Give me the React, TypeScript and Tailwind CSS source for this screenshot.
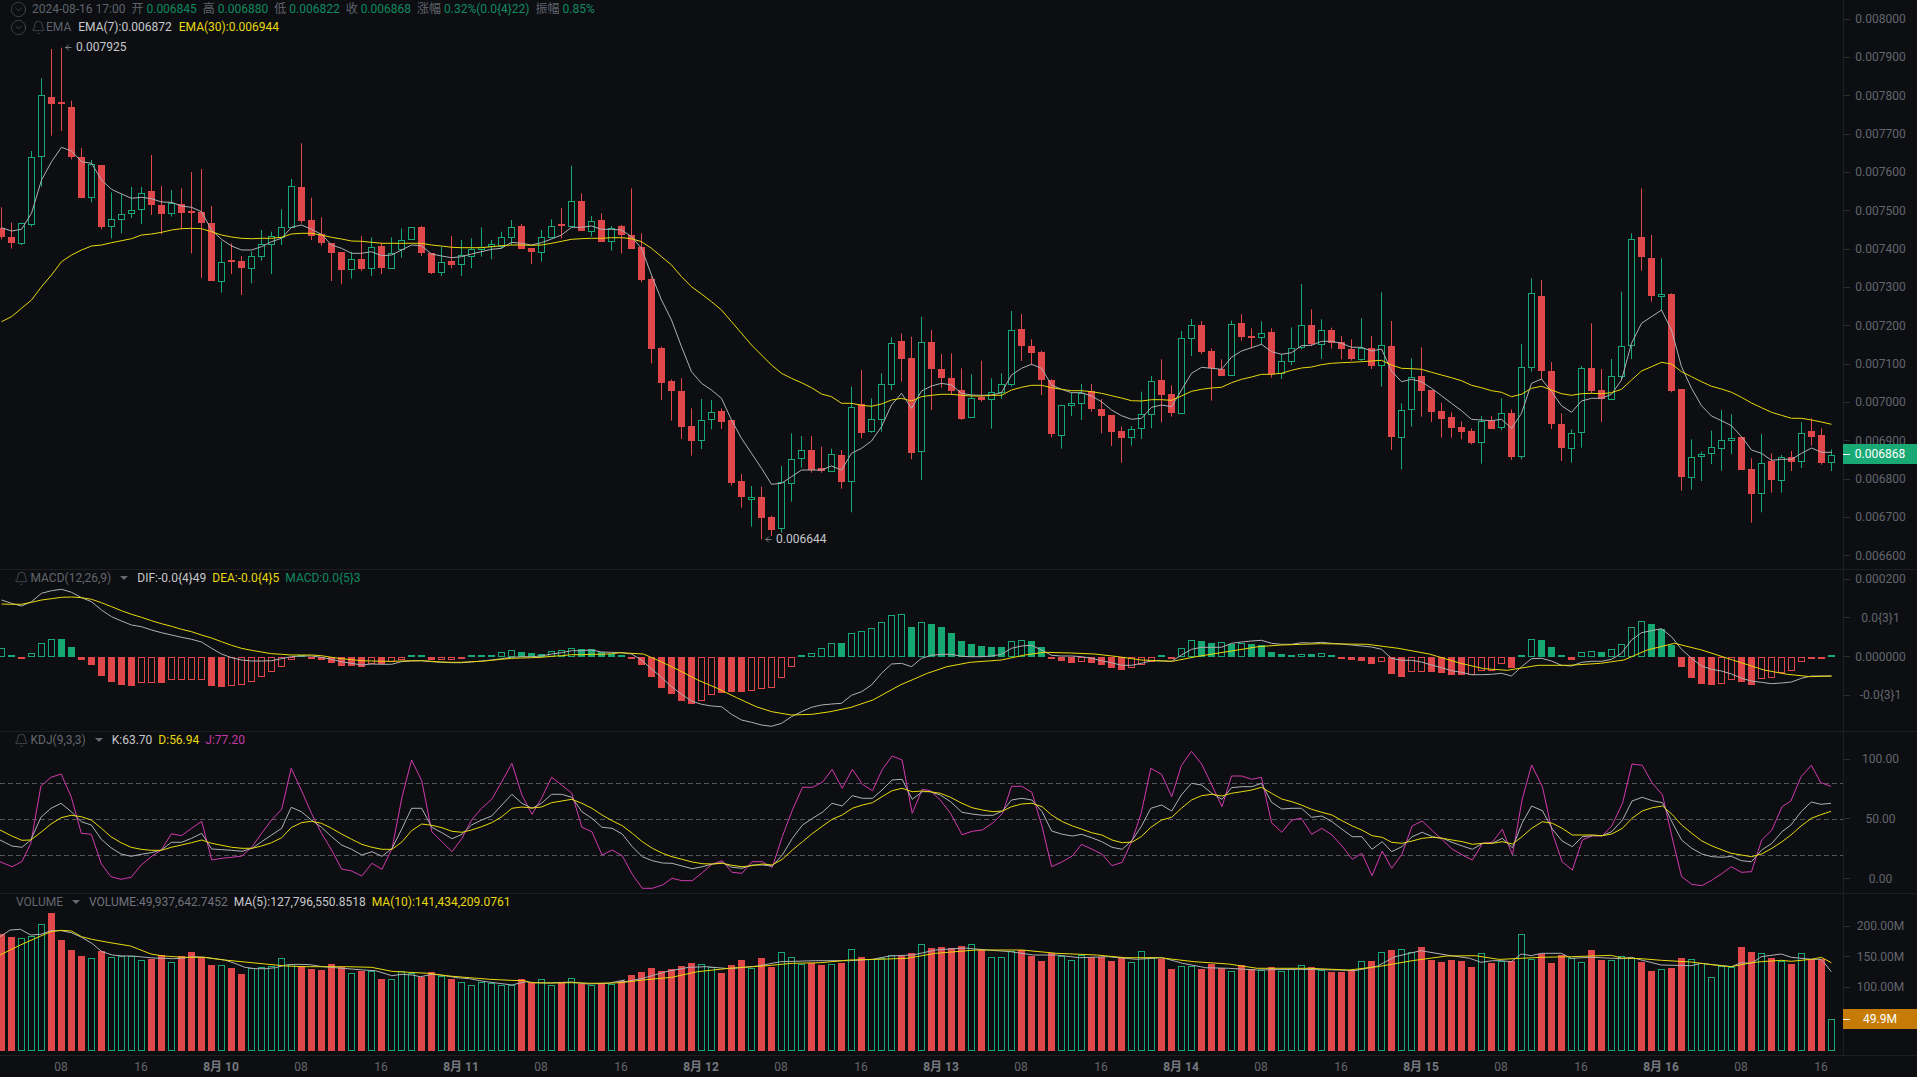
import React from "react";
import { ArrowLeft, Bell, CircleChevronDown } from "lucide-react";

// all y values below are page y * 3, read off the chart
type Candle = ["u" | "d", number, number, number, number];

const candles: Candle[] = [
  ["d",683,711,622,718],["d",711,728,668,746],["u",670,728,668,735],["u",472,673,453,680],["u",284,469,235,560],
  ["d",292,311,147,407],["d",306,311,143,393],["d",322,470,302,478],["d",472,593,444,593],["u",491,590,480,607],
  ["d",496,681,496,688],["u",656,679,577,715],["u",641,658,583,700],["u",631,640,561,654],["u",578,628,561,672],
  ["d",574,614,465,645],["d",616,641,558,703],["u",608,640,570,650],["d",611,638,565,688],["d",633,640,516,760],
  ["d",636,668,507,834],["d",670,842,618,842],["u",785,842,724,878],["d",780,785,730,822],["d",784,803,768,885],
  ["u",767,803,755,850],["u",731,769,690,782],["u",707,733,695,822],["u",680,710,628,735],["u",557,680,537,683],
  ["d",562,663,430,670],["d",661,707,593,720],["d",703,728,652,737],["d",729,759,729,843],["d",756,809,756,853],
  ["u",776,808,755,836],["d",778,807,708,813],["u",740,805,712,828],["d",738,803,728,822],["u",760,803,712,806],
  ["u",720,748,685,773],["u",682,716,682,718],["d",682,758,678,768],["d",760,819,760,822],["u",785,815,740,828],
  ["d",783,794,708,805],["u",765,793,720,828],["u",746,768,715,805],["u",740,748,682,770],["u",733,737,720,778],
  ["u",710,737,695,745],["u",680,712,660,735],["d",679,746,672,746],["d",744,755,744,792],["u",712,755,690,785],
  ["u",677,710,658,715],["d",672,678,624,715],["u",604,678,497,680],["d",604,693,580,693],["u",662,692,648,710],
  ["d",660,725,640,725],["u",683,724,678,752],["d",679,705,675,760],["d",705,747,565,747],["d",742,840,700,847],
  ["d",838,1046,830,1090],["d",1045,1148,1040,1200],["d",1143,1172,1138,1262],["d",1174,1280,1135,1317],["d",1278,1322,1225,1367],
  ["u",1259,1321,1197,1347],["u",1235,1258,1200,1288],["d",1234,1265,1225,1287],["d",1261,1448,1261,1457],["d",1444,1490,1422,1523],
  ["u",1492,1496,1458,1580],["d",1492,1553,1460,1618],["d",1551,1589,1547,1608],["u",1445,1585,1398,1598],["u",1376,1450,1300,1505],
  ["u",1351,1375,1308,1403],["d",1351,1410,1308,1418],["d",1405,1412,1340,1418],["u",1363,1412,1346,1415],["d",1366,1445,1350,1466],
  ["u",1220,1444,1160,1537],["d",1213,1298,1110,1315],["u",1256,1294,1195,1298],["u",1151,1258,1120,1295],["u",1028,1153,1012,1170],
  ["d",1024,1077,1000,1145],["d",1074,1358,1010,1378],["u",1025,1354,950,1440],["d",1027,1107,990,1230],["d",1108,1134,1062,1163],
  ["d",1135,1174,1060,1185],["d",1171,1257,1105,1260],["u",1193,1252,1123,1253],["d",1191,1200,1082,1205],["u",1175,1198,1135,1286],
  ["u",1151,1175,1120,1197],["u",989,1151,933,1160],["d",988,1038,942,1083],["d",1039,1058,1018,1095],["d",1056,1140,1052,1185],
  ["d",1140,1302,1138,1312],["u",1214,1304,1214,1346],["u",1210,1214,1178,1248],["u",1178,1210,1152,1260],["d",1174,1227,1152,1235],
  ["d",1227,1248,1197,1300],["d",1245,1295,1245,1338],["d",1294,1314,1280,1388],["u",1286,1312,1278,1337],["u",1243,1285,1175,1317],
  ["u",1142,1243,1128,1285],["d",1141,1185,1078,1267],["d",1183,1238,1156,1250],["u",1013,1238,993,1241],["u",976,1013,957,1068],
  ["d",975,1056,963,1062],["d",1053,1105,1045,1202],["d",1108,1127,1078,1127],["u",971,1126,962,1127],["d",969,1011,943,1022],
  ["d",1008,1014,985,1045],["u",998,1010,964,1035],["d",996,1122,985,1133],["u",1082,1120,1062,1137],["u",1043,1082,982,1095],
  ["u",974,1042,852,1048],["d",975,1032,928,1038],["u",989,1033,958,1077],["d",990,1028,983,1046],["d",1026,1047,1008,1078],
  ["d",1047,1077,1018,1082],["u",1043,1076,955,1083],["d",1045,1098,1008,1107],["u",1034,1096,877,1160],["d",1038,1310,963,1350],
  ["u",1229,1310,1210,1408],["u",1130,1228,1075,1280],["d",1128,1172,1042,1250],["d",1170,1235,1170,1266],["d",1233,1257,1208,1313],
  ["d",1251,1283,1237,1313],["d",1281,1295,1264,1318],["d",1294,1329,1285,1333],["u",1262,1327,1248,1391],["d",1263,1287,1248,1287],
  ["u",1238,1282,1195,1290],["d",1239,1370,1228,1380],["u",1100,1369,1032,1378],["u",880,1100,835,1115],["d",888,1112,840,1140],
  ["d",1113,1271,1086,1287],["d",1272,1343,1240,1383],["u",1300,1343,1288,1388],["u",1105,1295,1098,1343],["d",1104,1173,970,1180],
  ["d",1171,1197,1107,1266],["u",1127,1196,1077,1196],["u",1037,1127,875,1138],["u",716,1036,700,1077],["d",712,771,565,812],
  ["d",775,887,705,905],["u",883,889,775,932],["d",883,1173,880,1177],["d",1168,1430,1168,1472],["u",1370,1432,1318,1469],
  ["u",1363,1369,1355,1443],["u",1340,1360,1292,1392],["u",1319,1345,1230,1412],["u",1313,1321,1243,1362],["d",1311,1409,1311,1409],
  ["d",1408,1481,1375,1568],["u",1388,1480,1302,1537],["d",1383,1439,1360,1478],["u",1370,1441,1365,1478],["d",1372,1385,1353,1413],
  ["u",1298,1384,1267,1404],["d",1294,1310,1255,1337],["d",1306,1389,1285,1394],["u",1364,1387,1348,1413],
];

const add = (ys: number[], off: number) => ys.map((y) => y + off);

const ema7 = [
  683,693,688,640,540,485,442,453,485,490,540,568,582,595,592,596,606,607,618,622,635,690,718,738,750,750,740,725,715,682,675,688,703,735,745,760,760,755,767,765,750,735,737,762,768,773,770,762,755,748,745,727,730,735,728,717,705,682,682,678,688,688,690,710,745,
  ...add([75,150,210,290,365,400,420,445,510,565,610,655,703,700,680,660,660,660,648,660,610,595,573,530,465,430,475,423,408,400,405,430,435,436,435,428,375,355,343,355,405,418,428,428,438,455,480,497,508], 750),
  ...add([475,442,435,440,390,340,322,325,328,292,273,263,253,275,283,278,257,256,244,244,250,262,262,273,267,333,365,358,365,385,407,430,452,478,480,482,478,505,460,370,357,395,437,457,423,415,415,403,360], 780),
  ...add([490,430,410,390,450,560,625,677,708,722,737,770,810,820,841,838,838,820,804,817,817], 540),
];

const ema30 = [
  965,950,925,900,860,825,785,765,750,738,735,728,722,716,705,702,697,690,686,685,686,695,705,711,715,716,715,715,712,702,700,700,705,712,717,723,724,727,730,730,730,730,730,735,738,742,743,743,743,740,737,735,735,736,735,730,724,718,716,715,715,713,713,716,725,
  ...add([-5,20,45,80,110,132,155,180,215,250,285,315,345,370,385,398,413,432,440,460,460,466,469,462,450,445,453,440,436,433,433,436,438,438,436,436,420,412,406,406,413,418,422,422,425,430,437,444,452], 750),
  ...add([423,419,419,421,408,394,388,384,382,368,358,351,343,343,340,331,324,321,314,310,308,307,305,303,301,315,325,326,328,337,345,353,362,376,383,392,397,410,403,385,379,390,401,406,401,400,401,398,388], 780),
  ...add([600,573,560,547,552,575,590,605,619,627,637,652,669,683,697,706,715,715,720,726,733], 540),
];

const macdBars = [
  27,6,-7,11,41,53,53,29,-8,-24,-57,-74,-84,-87,-79,-78,-79,-70,-70,-68,-68,-87,-90,-86,-83,-74,-60,-44,-30,-8,6,-6,-9,-18,-27,-28,-30,-20,-21,-16,-8,5,5,-8,-8,-8,-6,5,5,7,14,20,15,12,9,17,20,28,23,23,15,8,4,
  -6,-24,-60,-93,-110,-131,-141,-131,-113,-107,-105,-105,-101,-97,-93,-62,-29,6,12,26,42,42,71,78,86,104,126,129,90,104,100,91,73,48,38,33,30,30,47,51,47,30,-4,-12,-18,-14,-19,-25,-32,-38,-33,-24,-15,5,-5,28,50,49,42,46,40,42,38,35,16,8,5,10,10,11,5,-4,-9,-13,-20,-14,-50,-60,-46,-44,-46,-48,-53,-55,-55,-43,-42,-22,-33,6,53,52,30,6,-8,14,17,15,23,38,90,107,100,85,35,-30,-63,-80,-84,-82,-70,-76,-84,-65,-64,-48,-43,-15,-3,-3,3,
];
const macdFlip = new Set([72, 73, 74, 80]);

const dif = [
  120,130,138,125,100,92,88,97,113,125,150,170,183,195,200,210,218,225,232,238,246,265,282,293,300,303,303,302,296,290,288,288,292,298,305,310,315,312,313,313,305,303,302,305,307,308,308,306,303,300,296,292,290,290,288,282,278,272,272,270,276,277,
  ...add([188,192,210,237,262,290,313,333,343,348,350,373,390,397,405,409,400,380,365,352,345,342,340,316,305,285,250,222,220,230,205,196,193,193,199,200,200,198,193,175,168,166,180,196,198,198,200,205,212,218,226,226,220,212,213,214,195,178,172,172,172,160,156,153,151,160,163,163,158,159,157,160,162,165,168,171,178,205,211,211,216,225,233,242,247,254,254,253,250,258,230,206,205,213,226,228,217,214,214,208,190,150,128,122,116,140,178,205,228,238,243,252,265,273,277,281,279,276,265,258,258,258], 90),
];
const dea1 = [132,133,133,127,120,116,112,111,113,118,128,140,152,163,172,182,191,199,208,215,225,234,245,256,265,271,276,281,283,285,285,285,287,292,296,299,302,303,304,304,303,302,302,304,306,307,307,305,304,301,298,295,294,293,292,289,287,284,284,283,283,281];
const dea2: [number, number][] = [[0,188],[30,192],[50,212],[75,240],[100,270],[125,295],[150,323],[175,350],[195,365],[220,375],[247,373],[270,365],[297,352],[325,330],[360,285],[395,250],[420,230],[450,217],[490,210],[520,195],[545,187],[580,189],[610,192],[640,200],[670,210],[710,214],[740,200],[780,185],[820,170],[850,165],[900,161],[960,163],[1000,175],[1040,192],[1080,220],[1110,236],[1140,241],[1180,226],[1220,226],[1260,220],[1290,210],[1320,180],[1355,160],[1390,180],[1430,210],[1470,240],[1500,253],[1530,260],[1557,258]];

const jLeft: [number, number][] = [[0,365],[20,380],[37,365],[52,310],[69,138],[86,112],[103,102],[120,170],[137,280],[154,283],[171,372],[187,410],[204,418],[221,412],[238,375],[255,350],[272,330],[289,281],[306,287],[323,265],[340,244],[357,360],[374,355],[391,352],[408,348],[425,320],[441,280],[458,240],[475,208],[491,85],[508,150],[525,220],[542,280],[559,330],[576,387],[593,393],[610,408],[627,370],[644,388],[661,325],[678,170],[694,60],[711,122],[728,275],[745,305],[762,335],[779,295],[795,240],[812,205],[829,178],[846,125],[863,70],[880,165],[897,223],[913,175],[930,112],[947,135],[964,160],[981,262],[998,275],[1015,345],[1032,330],[1049,347],[1066,403],[1083,445],[1100,445],[1117,435],[1133,415],[1150,422],[1167,422],[1184,398],[1201,372],[1218,362],[1234,397],[1251,400],[1268,365],[1285,365],[1302,382],[1319,290],[1336,210],[1353,142],[1370,142],[1387,126],[1403,88],[1420,145],[1437,88],[1454,133],[1471,152],[1487,90],[1504,48],[1521,60],[1538,220],[1555,148]];
const kLeft: [number, number][] = [[0,300],[20,318],[37,322],[52,300],[69,232],[86,205],[103,190],[120,215],[137,245],[154,255],[171,298],[187,323],[204,342],[221,349],[238,343],[255,338],[272,330],[289,307],[306,307],[323,295],[340,280],[357,327],[374,329],[391,331],[408,334],[425,325],[441,305],[458,285],[475,265],[491,202],[508,215],[525,240],[542,262],[559,290],[576,315],[593,328],[610,345],[627,335],[644,349],[661,325],[678,265],[694,205],[711,205],[728,262],[745,278],[762,296],[779,283],[795,255],[812,240],[829,228],[846,195],[863,163],[880,190],[897,205],[913,190],[930,163],[947,163],[964,172],[981,215],[998,235],[1015,262],[1032,265],[1049,282],[1066,320],[1083,350],[1100,362],[1117,369],[1133,370],[1150,378],[1167,386],[1184,380],[1201,372],[1218,368],[1234,382],[1251,385],[1268,375],[1285,375],[1302,378],[1319,345],[1336,295],[1353,255],[1370,235],[1387,216],[1403,190],[1420,198],[1437,167],[1454,175],[1471,175],[1487,150],[1504,120],[1521,118],[1538,178],[1555,155]];
const dLeft: [number, number][] = [[0,270],[20,288],[37,301],[52,300],[69,277],[86,252],[103,233],[120,226],[137,230],[154,240],[171,265],[187,290],[204,308],[221,322],[238,328],[255,331],[272,331],[289,322],[306,315],[323,308],[340,300],[357,310],[374,316],[391,322],[408,325],[425,325],[441,318],[458,308],[475,293],[491,263],[508,248],[525,244],[542,250],[559,265],[576,282],[593,298],[610,313],[627,322],[644,328],[661,328],[678,305],[694,272],[711,252],[728,256],[745,263],[762,274],[779,277],[795,270],[812,260],[829,248],[846,230],[863,205],[880,201],[897,204],[913,201],[930,188],[947,183],[964,178],[981,190],[998,205],[1015,225],[1032,242],[1049,257],[1066,280],[1083,305],[1100,325],[1117,340],[1133,350],[1150,358],[1167,366],[1184,371],[1201,372],[1218,370],[1234,376],[1251,380],[1268,377],[1285,372],[1302,375],[1319,358],[1336,330],[1353,305],[1370,280],[1387,258],[1403,238],[1420,225],[1437,205],[1454,195],[1471,188],[1487,170],[1504,152],[1521,145],[1538,155],[1555,153]];
const jRight: [number, number][] = [[16,152],[32,180],[48,220],[66,284],[82,274],[98,270],[115,248],[130,220],[144,139],[160,139],[176,157],[192,260],[207,380],[224,365],[240,347],[254,313],[270,327],[286,342],[302,377],[318,367],[334,300],[348,220],[363,85],[380,103],[396,170],[411,77],[427,34],[443,72],[459,135],[475,200],[490,108],[506,108],[522,118],[537,112],[553,248],[569,277],[585,240],[600,235],[616,283],[632,265],[648,285],[664,318],[680,358],[695,340],[711,407],[727,333],[742,385],[758,343],[774,258],[790,243],[806,272],[822,300],[837,327],[853,345],[869,360],[885,310],[900,307],[916,268],[932,345],[947,180],[962,75],[979,140],[995,280],[1010,365],[1026,390],[1042,300],[1058,287],[1073,288],[1088,258],[1105,190],[1120,72],[1136,76],[1152,130],[1168,165],[1184,300],[1198,410],[1214,433],[1230,437],[1246,420],[1262,400],[1276,380],[1292,397],[1308,395],[1324,300],[1340,270],[1356,200],[1370,183],[1386,110],[1402,76],[1417,128],[1433,139]];
const kRight: [number, number][] = [[16,155],[32,165],[48,185],[66,217],[82,222],[98,226],[115,226],[130,213],[144,180],[160,175],[176,180],[192,215],[207,273],[224,283],[240,288],[254,283],[270,293],[286,305],[302,322],[318,328],[334,300],[348,260],[363,205],[380,195],[396,213],[411,165],[427,130],[443,135],[459,160],[475,178],[490,143],[506,140],[522,140],[537,130],[553,187],[569,207],[585,205],[600,205],[616,232],[632,228],[648,245],[664,268],[680,290],[695,290],[711,328],[727,305],[742,335],[758,320],[774,290],[790,277],[806,290],[822,295],[837,307],[853,318],[869,328],[885,310],[900,310],[916,295],[932,323],[947,250],[962,198],[979,212],[995,268],[1010,303],[1026,320],[1042,290],[1058,287],[1073,287],[1088,275],[1105,240],[1120,183],[1136,172],[1152,182],[1168,188],[1184,250],[1198,300],[1214,325],[1230,342],[1246,350],[1262,352],[1276,349],[1292,362],[1308,365],[1324,330],[1340,310],[1356,275],[1370,255],[1386,215],[1402,186],[1417,193],[1433,190]];
const dRight: [number, number][] = [[16,155],[32,160],[48,172],[66,190],[82,203],[98,210],[115,215],[130,213],[144,200],[160,192],[176,190],[192,200],[207,225],[224,245],[240,258],[254,267],[270,278],[286,285],[302,300],[318,308],[334,306],[348,290],[363,262],[380,240],[396,232],[411,205],[427,180],[443,167],[459,163],[475,168],[490,160],[506,155],[522,150],[537,142],[553,160],[569,177],[585,185],[600,195],[616,208],[632,217],[648,225],[664,242],[680,258],[695,270],[711,287],[727,292],[742,307],[758,310],[774,303],[790,295],[806,292],[822,295],[837,300],[853,305],[869,313],[885,310],[900,310],[916,305],[932,312],[947,290],[962,265],[979,245],[995,250],[1010,265],[1026,285],[1042,285],[1058,285],[1073,287],[1088,282],[1105,265],[1120,235],[1136,213],[1152,203],[1168,198],[1184,225],[1198,255],[1214,280],[1230,303],[1246,318],[1262,330],[1276,340],[1292,345],[1308,350],[1324,342],[1340,325],[1356,305],[1370,285],[1386,258],[1402,235],[1417,224],[1433,214]];

const volumes = [
  162,171,175,168,133,99,180,210,228,235,214,232,229,228,241,237,226,247,228,216,232,255,256,264,282,264,262,258,235,252,258,267,270,252,262,280,272,274,297,298,274,280,290,276,287,297,307,316,305,309,315,316,297,310,298,316,310,295,312,316,310,313,303,285,277,
  264,273,267,258,249,253,262,279,255,240,265,234,261,217,232,253,248,255,253,248,207,232,238,233,226,228,219,193,204,201,205,198,193,209,232,232,212,210,228,243,220,227,241,225,230,230,243,235,247,214,230,237,267,258,258,267,252,263,273,256,267,270,261,273,268,256,262,269,276,276,271,244,243,217,210,208,217,202,240,246,240,244,261,220,249,242,
  243,163,237,222,249,226,233,247,210,240,241,227,235,247,273,268,264,234,238,250,292,257,262,201,216,220,235,244,252,220,237,238,418,
];

const ma5A: [number, number][] = [[0,170],[25,150],[50,148],[75,165],[100,163],[125,152],[150,152],[175,158],[200,172],[225,190],[250,215],[275,225],[300,228],[325,228],[350,231],[375,234],[400,235],[425,236],[450,234],[475,230],[500,232],[525,236],[550,240],[575,250],[600,262],[625,266],[650,266],[675,263],[700,255],[725,253],[760,254],[790,260],[820,263],[860,267],[890,270],[920,272],[960,287],[985,283],[1010,285],[1030,290],[1060,283],[1090,287],[1120,293],[1150,296],[1180,303],[1210,308],[1255,315],[1270,310],[1290,305],[1310,308],[1345,309],[1400,306],[1440,312],[1490,310],[1530,300]];
const ma10A: [number, number][] = [[0,225],[50,195],[100,168],[125,155],[150,151],[175,153],[200,170],[225,178],[270,188],[320,198],[370,222],[400,228],[450,232],[500,232],[550,240],[600,246],[650,252],[700,258],[750,260],[800,260],[850,260],[910,262],[960,274],[1000,277],[1050,280],[1100,288],[1150,293],[1200,298],[1250,301],[1285,302],[1300,308],[1350,309],[1400,308],[1450,310],[1500,309]];
const ma5B: [number, number][] = [[0,188],[40,175],[80,155],[120,142],[150,140],[190,146],[240,138],[280,125],[340,122],[400,122],[440,118],[470,108],[510,105],[550,90],[600,84],[640,90],[680,95],[720,105],[760,105],[800,113],[850,110],[900,118],[945,113],[980,130],[1020,143],[1060,145],[1110,150],[1180,148],[1250,150],[1280,152],[1320,138],[1350,110],[1395,92],[1440,105],[1480,115],[1500,127],[1520,122]];
const ma10B: [number, number][] = [[0,188],[40,180],[90,172],[135,155],[190,145],[250,138],[300,130],[350,128],[400,120],[450,118],[500,115],[550,100],[620,90],[700,90],[760,100],[830,105],[880,113],[940,113],[1000,125],[1060,132],[1110,145],[1200,145],[1270,150],[1320,140],[1380,122],[1440,108],[1490,107],[1530,118]];
const ma5C: [number, number][] = [[4,242],[34,245],[64,222],[94,227],[124,220],[184,220],[214,235],[274,232],[304,233],[364,236],[394,232],[424,240],[484,255],[574,257],[604,250],[694,260],[724,248],[754,250],[784,230],[844,222],[874,232],[934,238],[964,238],[994,275]];
const ma10C: [number, number][] = [[4,238],[64,235],[124,232],[214,230],[274,228],[334,226],[364,234],[424,236],[484,241],[574,246],[634,254],[694,260],[754,248],[784,245],[844,241],[874,244],[934,238],[964,232],[994,248]];

const RED = "#e0474b";
const GREEN = "#15a872";
const LINE_GRAY = "#aeb0b3";
const LINE_YELLOW = "#e9d90c";
const LINE_PINK = "#d03aae";

const idxLine = (ys: number[], yf: (y: number) => number, start = 0) =>
  ys.map((y, k) => `${10 * (start + k) + 1.5},${yf(y).toFixed(1)}`).join(" ");

const pairLine = (pts: [number, number][], xOff: number, xScale: number, yf: (y: number) => number) =>
  pts.map(([x, y]) => `${(xOff + x / xScale).toFixed(1)},${yf(y).toFixed(1)}`).join(" ");

const Line = ({ points, color }: { points: string; color: string }) => (
  <polyline points={points} fill="none" stroke={color} strokeWidth="1" strokeLinejoin="round" />
);

const PriceChart = () => {
  const yf = (y: number) => y / 3;
  return (
    <svg width="1843" height="569" className="block">
      {candles.map(([t, top, bottom, hi, lo], i) => {
        const left = 10 * i - 2;
        const c = t === "u" ? GREEN : RED;
        const yt = Math.round(top / 3);
        const yb = Math.max(Math.round(bottom / 3), yt + 1);
        const wick = left + 3.5;
        return (
          <g key={i}>
            <line x1={wick} x2={wick} y1={hi / 3} y2={yt} stroke={c} />
            <line x1={wick} x2={wick} y1={yb} y2={lo / 3} stroke={c} />
            {t === "u" ? (
              <rect x={left + 0.5} y={yt + 0.5} width={6} height={yb - yt} fill="none" stroke={c} />
            ) : (
              <rect x={left} y={yt} width={7} height={yb - yt} fill={c} />
            )}
          </g>
        );
      })}
      <Line points={idxLine(ema7, yf)} color={LINE_GRAY} />
      <Line points={idxLine(ema30, yf)} color={LINE_YELLOW} />
    </svg>
  );
};

const MacdChart = () => {
  const yf = (y: number) => y / 3 - 10;
  const zero = 87;
  return (
    <svg width="1843" height="161" className="block">
      {macdBars.map((v, i) => {
        const prev = i > 0 ? macdBars[i - 1] : 0;
        const left = 10 * i - 2;
        const c = v > 0 ? GREEN : RED;
        const h = Math.max(Math.round(Math.abs(v) / 3), 2);
        const y = v > 0 ? zero - h : zero;
        let hollow = v > 0 ? v > prev : v >= prev;
        if (macdFlip.has(i)) hollow = !hollow;
        return hollow ? (
          <rect key={i} x={left + 0.5} y={y + 0.5} width={6} height={h - 1} fill="none" stroke={c} />
        ) : (
          <rect key={i} x={left} y={y} width={7} height={h} fill={c} />
        );
      })}
      <Line points={idxLine(dif, yf)} color={LINE_GRAY} />
      <Line points={`${idxLine(dea1, yf)} ${pairLine(dea2, 620, 1.285, (y) => yf(y + 90))}`} color={LINE_YELLOW} />
    </svg>
  );
};

const KdjChart = () => {
  const yf = (y: number) => y / 3 + 8;
  const both = (a: [number, number][], b: [number, number][]) =>
    `${pairLine(a, 0, 1.686, yf)} ${pairLine(b, 920, 1.573, yf)}`;
  return (
    <svg width="1843" height="161" className="block">
      {[51.5, 87.5, 123.5].map((y) => (
        <line key={y} x1="0" x2="1843" y1={y} y2={y} stroke="#55565b" strokeDasharray="5 3" />
      ))}
      <Line points={both(jLeft, jRight)} color={LINE_PINK} />
      <Line points={both(kLeft, kRight)} color={LINE_GRAY} />
      <Line points={both(dLeft, dRight)} color={LINE_YELLOW} />
    </svg>
  );
};

const VolumeChart = () => {
  const yf = (y: number) => y / 3 - 14;
  const base = 157;
  const a = (p: [number, number][]) => pairLine(p, 0, 2.45, yf);
  const b = (p: [number, number][]) => pairLine(p, 620, 1.742, (y) => yf(y + 120));
  const c = (p: [number, number][]) => pairLine(p, 1500, 3, yf);
  return (
    <svg width="1843" height="161" className="block">
      {volumes.map((v, i) => {
        const left = 10 * i - 2;
        const y = Math.round(yf(v));
        return candles[i][0] === "u" ? (
          <rect key={i} x={left + 0.5} y={y + 0.5} width={6} height={base - y - 1} fill="none" stroke={GREEN} />
        ) : (
          <rect key={i} x={left} y={y} width={7} height={base - y} fill={RED} />
        );
      })}
      <Line points={`${a(ma5A)} ${b(ma5B)} ${c(ma5C)}`} color={LINE_GRAY} />
      <Line points={`${a(ma10A)} ${b(ma10B)} ${c(ma10C)}`} color={LINE_YELLOW} />
    </svg>
  );
};

const Caret = () => (
  <svg width="8" height="4" viewBox="0 0 8 4" className="shrink-0">
    <path d="M0 0h8L4 4z" fill="#666a73" />
  </svg>
);

const AxisRow = ({ label }: { label: string }) => (
  <div className="flex h-4 items-center">
    <div className="h-px w-[6px] bg-[#2a2b30]" />
    <span className="w-[61px] text-center">{label}</span>
  </div>
);

const Stat = ({ label, value }: { label: string; value: string }) => (
  <span className="flex gap-[3px]">
    <span className="text-[#5f636d]">{label}</span>
    <span className="text-[#0f8a60]">{value}</span>
  </span>
);

const PriceNote = ({ value, className }: { value: string; className: string }) => (
  <div className={`absolute flex items-center gap-[3px] text-[#c6c8cc] ${className}`}>
    <ArrowLeft size={9} strokeWidth={1.5} />
    <span>{value}</span>
  </div>
);

const timeLabels = ["08","16","8月 10","08","16","8月 11","08","16","8月 12","08","16","8月 13","08","16","8月 14","08","16","8月 15","08","16","8月 16","08","16"];

export default function App() {
  return (
    <div className="flex h-[1077px] w-[1917px] flex-col overflow-hidden bg-[#0d0e11] text-xs text-[#62666f] font-['Roboto','Noto_Sans_CJK_SC',sans-serif]">
      {/* price */}
      <div className="flex h-[570px] border-b border-[#1d1e22]">
        <div className="relative w-[1843px]">
          <PriceChart />
          <div className="absolute left-[10px] top-0 flex flex-col">
            <div className="flex h-[18px] items-center gap-[5px]">
              <CircleChevronDown size={17} strokeWidth={0.8} className="text-[#5f636d]" />
              <div className="flex gap-[6px]">
                <span className="text-[#5f636d]">2024-08-16 17:00</span>
                <Stat label="开" value="0.006845" />
                <Stat label="高" value="0.006880" />
                <Stat label="低" value="0.006822" />
                <Stat label="收" value="0.006868" />
                <Stat label="涨幅" value="0.32%(0.0{4}22)" />
                <Stat label="振幅" value="0.85%" />
              </div>
            </div>
            <div className="flex h-[18px] items-center">
              <CircleChevronDown size={17} strokeWidth={0.8} className="text-[#5f636d]" />
              <Bell size={15} strokeWidth={1} className="ml-[4px] text-[#5f636d]" />
              <span className="text-[#5f636d]">EMA</span>
              <span className="ml-[7px] text-[#c6c8cc]">EMA(7):0.006872</span>
              <span className="ml-[7px] text-[#e8d80e]">EMA(30):0.006944</span>
            </div>
          </div>
          <PriceNote value="0.007925" className="left-[64px] top-[39px]" />
          <PriceNote value="0.006644" className="left-[764px] top-[531px]" />
        </div>
        <div className="relative w-[74px] border-l border-[#1d1e22] pt-[11px]">
          <div className="flex flex-col gap-[22.35px]">
            {["0.008000","0.007900","0.007800","0.007700","0.007600","0.007500","0.007400","0.007300","0.007200","0.007100","0.007000","0.006900","0.006800","0.006700","0.006600"].map((l) => (
              <AxisRow key={l} label={l} />
            ))}
          </div>
          <div className="absolute left-[-1px] right-0 top-[444px] flex h-5 items-center bg-[#18a974] text-white">
            <div className="h-px w-[7px] bg-white" />
            <span className="w-[60px] text-center">0.006868</span>
          </div>
        </div>
      </div>

      {/* macd */}
      <div className="flex h-[162px] border-b border-[#1d1e22]">
        <div className="relative w-[1843px]">
          <MacdChart />
          <div className="absolute left-[14px] top-0 flex h-4 items-center">
            <Bell size={15} strokeWidth={1} className="mr-[1.5px]" />
            <span>MACD(12,26,9)</span>
            <span className="mx-[9px]"><Caret /></span>
            <span className="text-[#c6c8cc]">DIF:-0.0{"{4}"}49</span>
            <span className="ml-[6px] text-[#e8d80e]">DEA:-0.0{"{4}"}5</span>
            <span className="ml-[6px] text-[#0f8a60]">MACD:0.0{"{5}"}3</span>
          </div>
        </div>
        <div className="w-[74px] border-l border-[#1d1e22] pt-px">
          <div className="flex flex-col gap-[22.8px]">
            {["0.000200","0.0{3}1","0.000000","-0.0{3}1"].map((l) => (
              <AxisRow key={l} label={l} />
            ))}
          </div>
        </div>
      </div>

      {/* kdj */}
      <div className="flex h-[162px] border-b border-[#1d1e22]">
        <div className="relative w-[1843px]">
          <KdjChart />
          <div className="absolute left-[14px] top-0 flex h-4 items-center">
            <Bell size={15} strokeWidth={1} className="mr-[1.5px]" />
            <span>KDJ(9,3,3)</span>
            <span className="mx-[9px]"><Caret /></span>
            <span className="text-[#c6c8cc]">K:63.70</span>
            <span className="ml-[6px] text-[#e8d80e]">D:56.94</span>
            <span className="ml-[6px] text-[#c53aa6]">J:77.20</span>
          </div>
        </div>
        <div className="w-[74px] border-l border-[#1d1e22] pt-[19px]">
          <div className="flex flex-col gap-[43.8px]">
            {["100.00","50.00","0.00"].map((l) => (
              <AxisRow key={l} label={l} />
            ))}
          </div>
        </div>
      </div>

      {/* volume */}
      <div className="flex h-[162px] border-b border-[#1d1e22]">
        <div className="relative w-[1843px]">
          <VolumeChart />
          <div className="absolute left-[16px] top-0 flex h-4 items-center">
            <span>VOLUME</span>
            <span className="mx-[9px]"><Caret /></span>
            <span className="text-[#6f737c]">VOLUME:49,937,642.7452</span>
            <span className="ml-[6px] text-[#c6c8cc]">MA(5):127,796,550.8518</span>
            <span className="ml-[6px] text-[#e8d80e]">MA(10):141,434,209.0761</span>
          </div>
        </div>
        <div className="relative w-[74px] border-l border-[#1d1e22] pt-[24px]">
          <div className="flex flex-col gap-[14.7px]">
            {["200.00M","150.00M","100.00M","50.00M"].map((l) => (
              <AxisRow key={l} label={l} />
            ))}
          </div>
          <div className="absolute left-[-1px] right-0 top-[115px] flex h-5 items-center bg-[#d08206]/95 text-white">
            <div className="h-px w-[7px] bg-white" />
            <span className="w-[60px] text-center">49.9M</span>
          </div>
        </div>
      </div>

      {/* time axis */}
      <div className="flex flex-1 items-center pl-[21px]">
        {timeLabels.map((l, i) => (
          <span key={i} className={`w-20 shrink-0 text-center ${l.length > 2 ? "font-bold text-[#747881]" : "text-[#62666f]"}`}>
            {l}
          </span>
        ))}
      </div>
    </div>
  );
}
